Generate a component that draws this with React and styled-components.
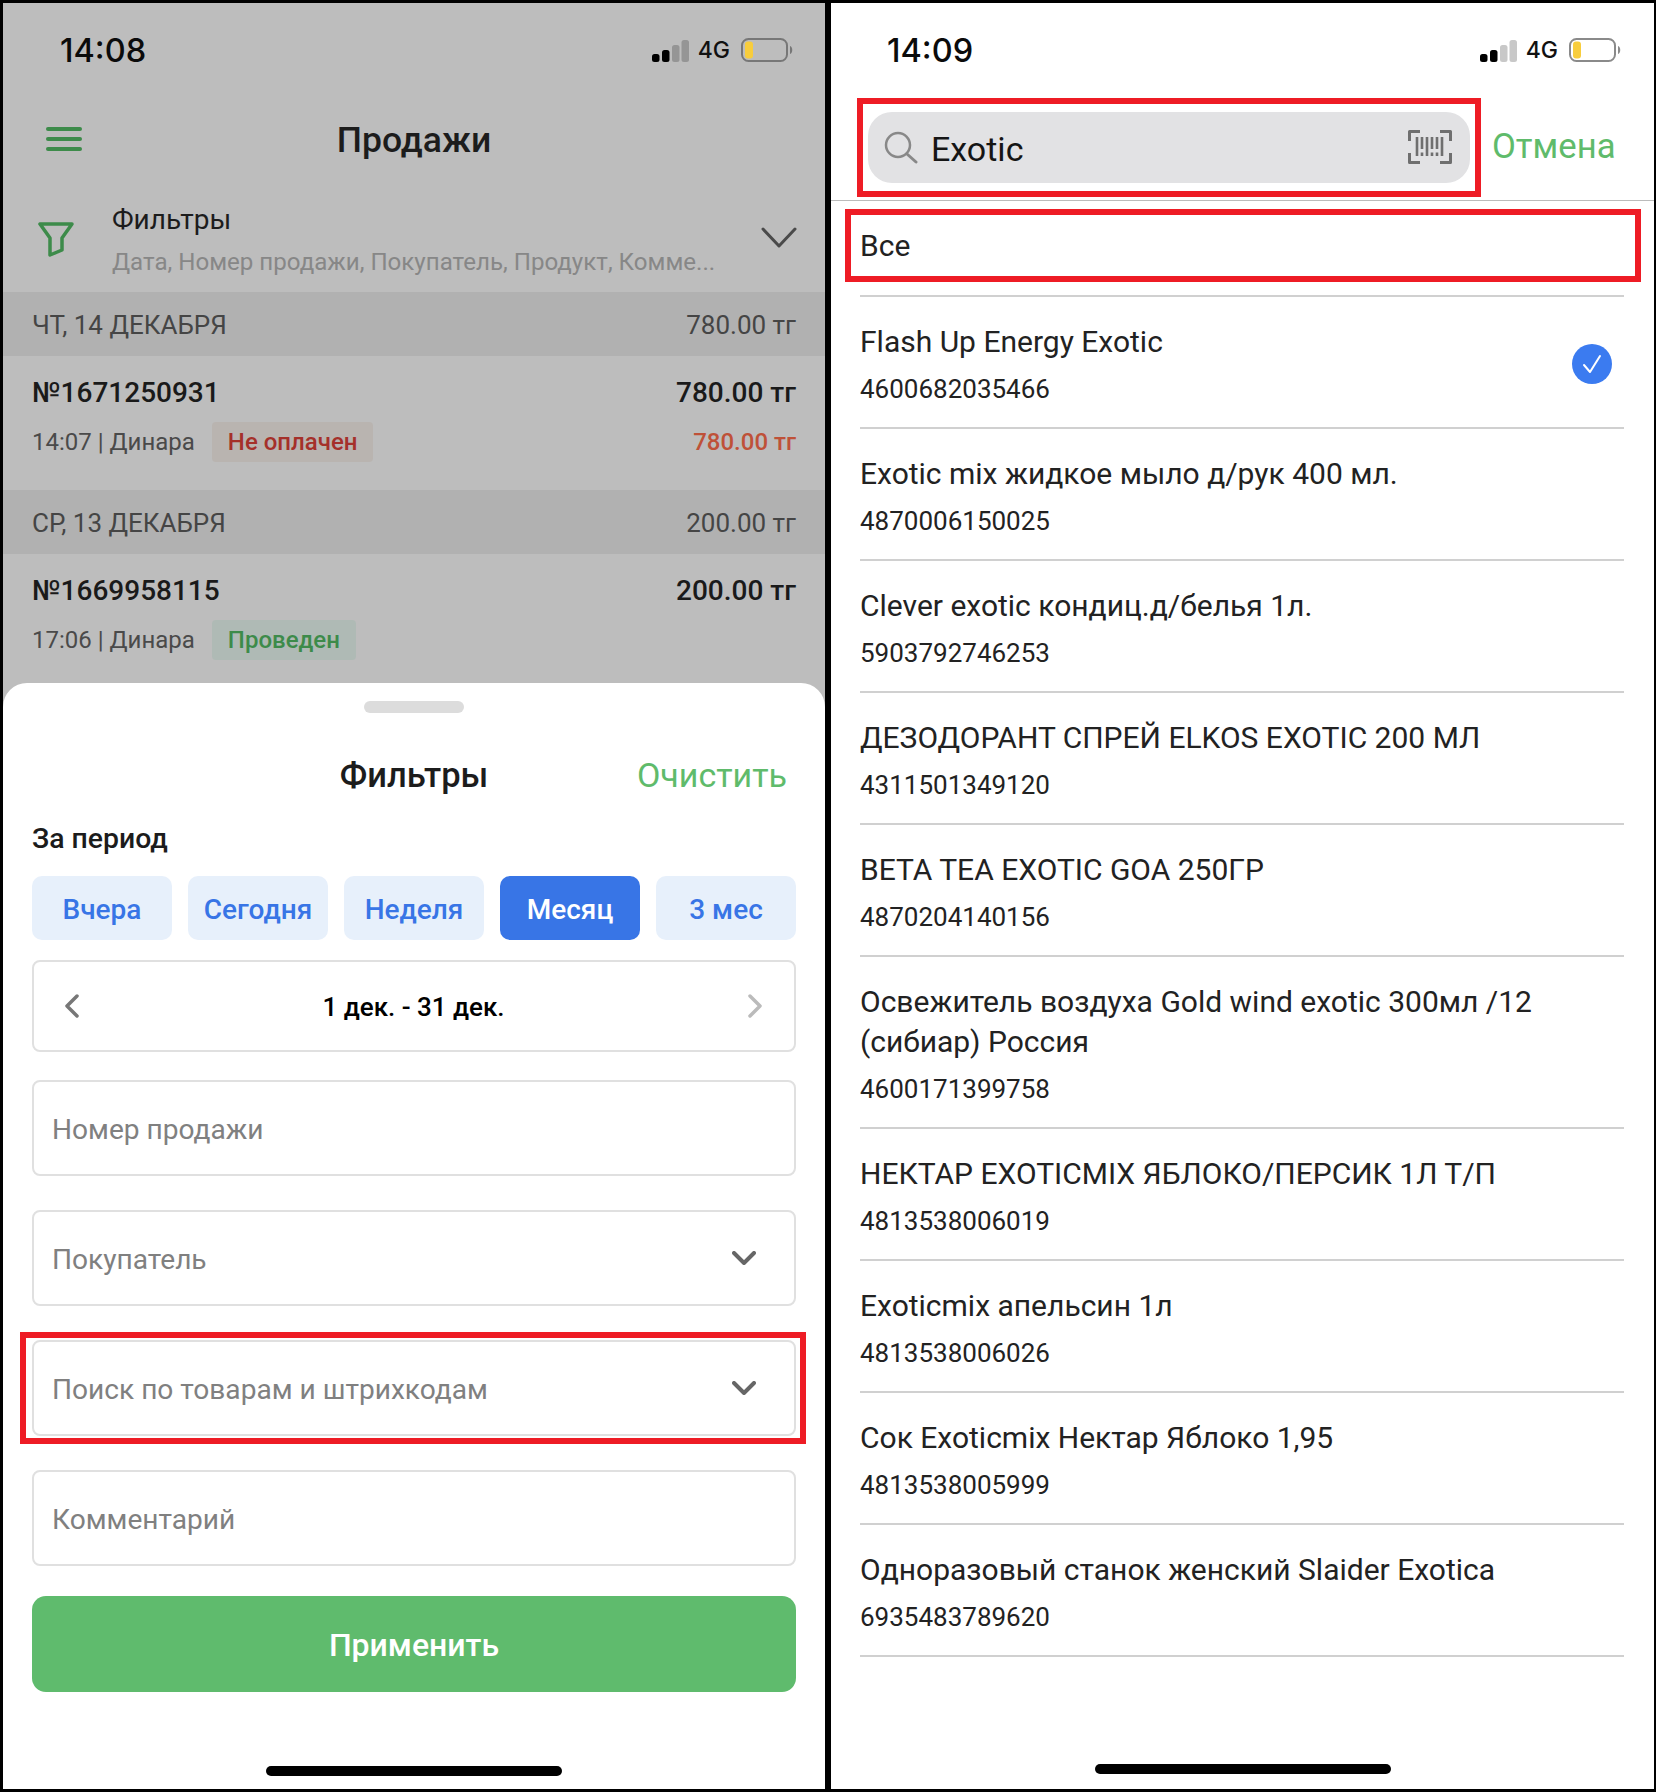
import styled, { createGlobalStyle } from 'styled-components';

const GlobalStyle = createGlobalStyle`
  * { box-sizing: border-box; }
  html, body { margin: 0; padding: 0; background: #000; }
  body { font-family: 'Roboto', 'Liberation Sans', sans-serif; }
`;

const Page = styled.div`
  display: grid;
  grid-template-columns: 822px 823px;
  column-gap: 6px;
  width: 1656px;
  height: 1792px;
  padding: 3px 2px 3px 3px;
  background: #000;
`;

const Phone = styled.div`
  display: flex;
  flex-direction: column;
  height: 1786px;
  background: ${({ $dim }) => ($dim ? '#bdbdbd' : '#fff')};
`;

const Dimmed = styled.div`
  height: 680px;
`;

/* status bar */
const StatusWrap = styled.div`
  display: flex;
  justify-content: space-between;
  align-items: center;
  height: 94px;
  padding: 0 ${({ $dim }) => ($dim ? 31 : 32)}px 0 ${({ $dim }) => ($dim ? 57 : 56)}px;
`;

const Clock = styled.div`
  font-family: 'Inter', sans-serif;
  font-size: 32.5px;
  font-weight: 500;
  color: #0b0b0b;
`;

const StatusIcons = styled.div`
  display: flex;
  align-items: center;
`;

const Network = styled.span`
  margin: 0 11px 0 9px;
  font-family: 'Inter', sans-serif;
  font-size: 23px;
  font-weight: 500;
  color: #111;
`;

const StatusBar = ({ time, dim }) => (
  <StatusWrap $dim={dim}>
    <Clock>{time}</Clock>
    <StatusIcons>
      <svg width="37" height="23" viewBox="0 0 37 23">
        <rect x="0" y="15" width="7.5" height="8" rx="2.5" fill="#000" />
        <rect x="10" y="11" width="7.5" height="12" rx="2.5" fill="#000" />
        <rect x="20" y="6" width="7.5" height="17" rx="2.5" fill={dim ? '#959595' : '#c8c8c8'} />
        <rect x="29.5" y="1" width="7.5" height="22" rx="2.5" fill={dim ? '#959595' : '#c8c8c8'} />
      </svg>
      <Network>4G</Network>
      <svg width="53" height="24" viewBox="0 0 53 24">
        <rect x="1" y="1" width="45" height="22" rx="6.5" fill="none" stroke={dim ? '#777' : '#8a8a8a'} strokeWidth="2" />
        <rect x="4" y="3.5" width="8" height="17" rx="3" fill="#f8cd3c" />
        <path d="M49 8 C52 9 52 15 49 16 Z" fill={dim ? '#777' : '#8a8a8a'} />
      </svg>
    </StatusIcons>
  </StatusWrap>
);

/* sales list */
const TopBar = styled.div`
  position: relative;
  display: flex;
  align-items: center;
  justify-content: center;
  height: 86px;
`;

const MenuButton = styled.div`
  position: absolute;
  left: 43px;
  top: 30px;
  display: flex;
  flex-direction: column;
  gap: 6px;
  width: 36px;

  span {
    height: 4px;
    border-radius: 2px;
    background: #3d8b4a;
  }
`;

const ScreenTitle = styled.div`
  font-size: 35.5px;
  font-weight: 500;
  color: #1c1c1c;
`;

const FilterRow = styled.div`
  display: flex;
  align-items: center;
  height: 109px;
  padding: 0 28px 0 35px;
`;

const FunnelIcon = styled.svg`
  margin-top: 3px;
`;

const FilterText = styled.div`
  flex: 1;
  margin-left: 38px;
  padding-top: 7px;
`;

const FilterTitle = styled.div`
  font-size: 28px;
  line-height: 36px;
  color: #1c1c1c;
`;

const FilterHint = styled.div`
  margin-top: 6px;
  font-size: 24.1px;
  line-height: 36px;
  color: #878787;
`;

const DateBar = styled.div`
  display: flex;
  align-items: center;
  justify-content: space-between;
  height: 64px;
  padding: 2px 29px 0;
  background: #b1b1b1;
  font-size: 26px;
  color: #454545;
`;

const Sale = styled.div`
  height: ${({ $height }) => $height}px;
  padding: 18px 29px 0;
`;

const SaleLine = styled.div`
  display: flex;
  align-items: center;
  justify-content: space-between;
  height: 36px;
  font-size: 28px;
  font-weight: 500;
  color: #1a1a1a;
`;

const SaleMeta = styled.div`
  display: flex;
  align-items: center;
  justify-content: space-between;
  margin-top: 12px;
  height: 40px;
`;

const MetaLeft = styled.div`
  display: flex;
  align-items: center;
  gap: 17px;
  font-size: 24px;
  color: #4a4a4a;
`;

const Badge = styled.span`
  display: flex;
  align-items: center;
  height: 40px;
  padding: 0 16px;
  border-radius: 4px;
  font-size: 24px;
  font-weight: 500;
  background: ${({ $tone }) => ($tone === 'red' ? '#b9b4b0' : '#afbab5')};
  color: ${({ $tone }) => ($tone === 'red' ? '#a5302a' : '#3d8b4a')};
`;

const Debt = styled.span`
  font-size: 24px;
  font-weight: 500;
  color: #bf5138;
`;

/* filter sheet */
const Sheet = styled.div`
  display: flex;
  flex-direction: column;
  flex: 1;
  padding: 18px 29px 0;
  background: #fff;
  border-radius: 24px 24px 0 0;
`;

const Handle = styled.div`
  align-self: center;
  width: 100px;
  height: 12px;
  border-radius: 6px;
  background: #dcdcdc;
`;

const SheetHead = styled.div`
  display: grid;
  grid-template-columns: 1fr auto 1fr;
  align-items: center;
  height: 50px;
  margin-top: 37px;
`;

const SheetTitle = styled.div`
  grid-column: 2;
  font-size: 34.5px;
  font-weight: 500;
  color: #1c1c1c;
`;

const Clear = styled.div`
  justify-self: end;
  padding-right: 9px;
  font-size: 34px;
  color: #5fbb6b;
`;

const SectionLabel = styled.div`
  margin-top: 21px;
  font-size: 28.4px;
  font-weight: 500;
  line-height: 36px;
  color: #1c1c1c;
`;

const Chips = styled.div`
  display: grid;
  grid-template-columns: repeat(5, 140px);
  column-gap: 16px;
  margin-top: 19px;
`;

const Chip = styled.div`
  display: flex;
  align-items: center;
  justify-content: center;
  height: 64px;
  padding-top: 2px;
  border-radius: 10px;
  font-size: 28px;
  font-weight: 500;
  background: ${({ $active }) => ($active ? '#3875e6' : '#e7f0fb')};
  color: ${({ $active }) => ($active ? '#fff' : '#3875e6')};
`;

const DateRange = styled.div`
  display: flex;
  align-items: center;
  justify-content: space-between;
  height: 92px;
  margin-top: 20px;
  padding: 0 31px 0 30px;
  border: 2px solid #e0e0e0;
  border-radius: 8px;
  font-size: 26px;
  font-weight: 500;
  color: #000;

  span {
    padding-top: 2px;
  }
`;

const Field = styled.div`
  position: relative;
  display: flex;
  align-items: center;
  justify-content: space-between;
  height: 96px;
  margin-top: ${({ $gap }) => $gap}px;
  padding: 0 38px 0 18px;
  border: 2px solid #e0e0e0;
  border-radius: 8px;
  color: #808080;
`;

const FieldLabel = styled.span`
  padding-top: 3px;
  font-size: 28.1px;
`;

const RedFrame = styled.div`
  position: absolute;
  top: ${({ $t }) => $t}px;
  right: ${({ $r }) => $r}px;
  bottom: ${({ $b }) => $b}px;
  left: ${({ $l }) => $l}px;
  border: 6px solid #ee1c25;
  pointer-events: none;
`;

const ApplyButton = styled.div`
  display: flex;
  align-items: center;
  justify-content: center;
  height: 96px;
  margin-top: 30px;
  padding-top: 2px;
  border-radius: 14px;
  background: #5fbb6d;
  font-size: 32px;
  font-weight: 500;
  color: #fff;
`;

const HomeBar = styled.div`
  align-self: center;
  flex-shrink: 0;
  width: 296px;
  height: 10px;
  margin-top: ${({ $top }) => $top}px;
  border-radius: 5px;
  background: #000;
`;

/* product search */
const SearchRow = styled.div`
  display: flex;
  align-items: center;
  gap: 22px;
  height: 104px;
  padding: 0 0 3px 37px;
  border-bottom: 1px solid #bbb;
`;

const SearchBox = styled.div`
  position: relative;
  display: flex;
  align-items: center;
  width: 602px;
  height: 71px;
  padding: 0 17px 0 16px;
  border-radius: 24px;
  background: #e2e2e4;
`;

const SearchText = styled.div`
  flex: 1;
  margin-left: 13px;
  padding-top: 3px;
  font-size: 34px;
  color: #151515;
`;

const Cancel = styled.div`
  margin-bottom: 2px;
  font-size: 34.7px;
  color: #5fbb6b;
`;

const AllRow = styled.div`
  position: relative;
  height: 96px;
  margin: 0 30px 0 29px;
  padding-top: 25px;
  border-bottom: 2px solid #d0d0d0;
  font-size: 30px;
  line-height: 40px;
  color: #222;
`;

const Item = styled.div`
  display: flex;
  align-items: center;
  margin: 0 30px 0 29px;
  padding: 25px 12px 22px 0;
  border-bottom: 2px solid #d0d0d0;
`;

const ItemText = styled.div`
  flex: 1;
`;

const ItemName = styled.div`
  font-size: 30px;
  line-height: 40px;
  color: #222;
`;

const ItemCode = styled.div`
  margin-top: 11px;
  font-size: 26px;
  line-height: 32px;
  color: #222;
`;

const CheckMark = styled.div`
  display: flex;
  align-items: center;
  justify-content: center;
  width: 40px;
  height: 40px;
  border-radius: 50%;
  background: #3b7bf0;
`;

const Chevron = ({ width, height, color, stroke, d }) => (
  <svg width={width} height={height} viewBox={`0 0 ${width} ${height}`} fill="none">
    <path d={d} stroke={color} strokeWidth={stroke} strokeLinecap="round" strokeLinejoin="round" />
  </svg>
);

const FieldChevron = () => <Chevron width={24} height={14} color="#666" stroke={4} d="M2 2 L12 12 L22 2" />;

const products = [
  { name: 'Flash Up Energy Exotic', code: '4600682035466', checked: true },
  { name: 'Exotic mix жидкое мыло д/рук 400 мл.', code: '4870006150025' },
  { name: 'Clever exotic кондиц.д/белья 1л.', code: '5903792746253' },
  { name: 'ДЕЗОДОРАНТ СПРЕЙ ELKOS EXOTIC 200 МЛ', code: '4311501349120' },
  { name: 'BETA TEA EXOTIC GOA 250ГР', code: '4870204140156' },
  { name: 'Освежитель воздуха Gold wind exotic 300мл /12 (сибиар) Россия', code: '4600171399758' },
  { name: 'НЕКТАР EXOTICMIX ЯБЛОКО/ПЕРСИК 1Л Т/П', code: '4813538006019' },
  { name: 'Exoticmix апельсин 1л', code: '4813538006026' },
  { name: 'Сок Exoticmix Нектар Яблоко 1,95', code: '4813538005999' },
  { name: 'Одноразовый станок женский Slaider Exotica', code: '6935483789620' },
];

const periods = ['Вчера', 'Сегодня', 'Неделя', 'Месяц', '3 мес'];

export default function App() {
  return (
    <Page>
      <GlobalStyle />

      <Phone $dim>
        <Dimmed>
          <StatusBar time="14:08" dim />
          <TopBar>
            <MenuButton><span /><span /><span /></MenuButton>
            <ScreenTitle>Продажи</ScreenTitle>
          </TopBar>
          <FilterRow>
            <FunnelIcon width="36" height="35" viewBox="0 0 36 35" fill="none">
              <path d="M2 2 H34 L24 16 V28 L12 33 V16 Z" stroke="#3d8b4a" strokeWidth="3.5" strokeLinejoin="round" />
            </FunnelIcon>
            <FilterText>
              <FilterTitle>Фильтры</FilterTitle>
              <FilterHint>Дата, Номер продажи, Покупатель, Продукт, Комме...</FilterHint>
            </FilterText>
            <Chevron width={36} height={21} color="#4a4a4a" stroke={3} d="M2 2 L18 19 L34 2" />
          </FilterRow>
          <DateBar><span>ЧТ, 14 ДЕКАБРЯ</span><span>780.00 тг</span></DateBar>
          <Sale $height={134}>
            <SaleLine><span>№1671250931</span><span>780.00 тг</span></SaleLine>
            <SaleMeta>
              <MetaLeft>14:07 | Динара <Badge $tone="red">Не оплачен</Badge></MetaLeft>
              <Debt>780.00 тг</Debt>
            </SaleMeta>
          </Sale>
          <DateBar><span>СР, 13 ДЕКАБРЯ</span><span>200.00 тг</span></DateBar>
          <Sale $height={129}>
            <SaleLine><span>№1669958115</span><span>200.00 тг</span></SaleLine>
            <SaleMeta>
              <MetaLeft>17:06 | Динара <Badge $tone="green">Проведен</Badge></MetaLeft>
            </SaleMeta>
          </Sale>
        </Dimmed>

        <Sheet>
          <Handle />
          <SheetHead>
            <SheetTitle>Фильтры</SheetTitle>
            <Clear>Очистить</Clear>
          </SheetHead>
          <SectionLabel>За период</SectionLabel>
          <Chips>
            {periods.map((p) => <Chip key={p} $active={p === 'Месяц'}>{p}</Chip>)}
          </Chips>
          <DateRange>
            <Chevron width={16} height={24} color="#777" stroke={3.5} d="M13 2 L3 12 L13 22" />
            <span>1 дек. - 31 дек.</span>
            <Chevron width={16} height={24} color="#bbb" stroke={3.5} d="M3 2 L13 12 L3 22" />
          </DateRange>
          <Field $gap={28}><FieldLabel>Номер продажи</FieldLabel></Field>
          <Field $gap={34}><FieldLabel>Покупатель</FieldLabel> <FieldChevron /></Field>
          <Field $gap={34}>
            <FieldLabel>Поиск по товарам и штрихкодам</FieldLabel> <FieldChevron />
            <RedFrame $t={-10} $r={-12} $b={-10} $l={-14} />
          </Field>
          <Field $gap={34}><FieldLabel>Комментарий</FieldLabel></Field>
          <ApplyButton>Применить</ApplyButton>
          <HomeBar $top={74} />
        </Sheet>
      </Phone>

      <Phone>
        <StatusBar time="14:09" />
        <SearchRow>
          <SearchBox>
            <svg width="34" height="33" viewBox="0 0 34 33" fill="none">
              <circle cx="14" cy="14" r="12" stroke="#888" strokeWidth="2.5" />
              <path d="M23 23 L32 31" stroke="#888" strokeWidth="3" strokeLinecap="round" />
            </svg>
            <SearchText>Exotic</SearchText>
            <svg width="46" height="36" viewBox="0 0 46 36" fill="none">
              <path d="M2.5 12 V2.5 H13 M33 2.5 H43.5 V12 M2.5 24 V33.5 H13 M33 33.5 H43.5 V24" stroke="#6f6f6f" strokeWidth="3" strokeLinejoin="round" />
              <path d="M10 8 V27 M15 8 V20 M20 8 V27 M25 8 V20 M30 8 V20 M35 8 V27" stroke="#6f6f6f" strokeWidth="2.6" />
              <path d="M15 23.5 V27 M25 23.5 V27 M30 23.5 V27" stroke="#6f6f6f" strokeWidth="2.6" />
            </svg>
            <RedFrame $t={-14} $r={-11} $b={-14} $l={-11} />
          </SearchBox>
          <Cancel>Отмена</Cancel>
        </SearchRow>
        <AllRow>
          Все
          <RedFrame $t={8} $r={-17} $b={13} $l={-15} />
        </AllRow>
        {products.map((p) => (
          <Item key={p.code}>
            <ItemText>
              <ItemName>{p.name}</ItemName>
              <ItemCode>{p.code}</ItemCode>
            </ItemText>
            {p.checked && (
              <CheckMark>
                <svg width="22" height="22" viewBox="0 0 22 22" fill="none">
                  <path d="M3 12 L9 19 L19 3" stroke="#fff" strokeWidth="2" strokeLinecap="round" strokeLinejoin="round" />
                </svg>
              </CheckMark>
            )}
          </Item>
        ))}
        <HomeBar $top={107} />
      </Phone>
    </Page>
  );
}
